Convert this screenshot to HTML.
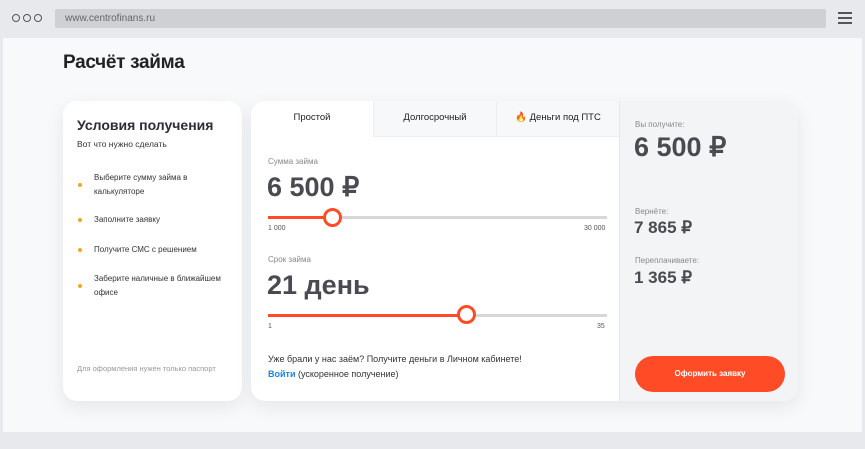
<!DOCTYPE html>
<html><head><meta charset="utf-8"><style>
*{margin:0;padding:0;box-sizing:border-box}
body{width:865px;height:449px;background:#e8e9ec;font-family:"Liberation Sans",sans-serif;position:relative;overflow:hidden;color:#2b2d33}
.abs{position:absolute}
.dot{width:8px;height:8px;border:1.5px solid #555;border-radius:50%;top:14px}
.url{left:55px;top:9px;width:771px;height:19px;background:#cfd0d4;border-radius:2px;font-size:10px;color:#666;padding:4px 0 0 10px}
.ham{left:838px;width:14px;height:2px;background:#555}
.content{left:3px;top:38px;width:859px;height:394px;background:#f8f9fb}
.card{background:#fff;border-radius:14px;box-shadow:0 6px 18px rgba(0,0,0,.08)}
.li{left:94px;font-size:8px;line-height:14px;color:#333}
.b{left:78px;width:4px;height:4px;border-radius:50%;background:#f5a623}
.tab{top:101px;height:36px;font-size:9.5px;text-align:center;line-height:34px;color:#222;background:#f7f8f9;border-left:1px solid #eceef0;border-bottom:1px solid #eceef0}
.lbl{font-size:8px;color:#888}
.big{font-weight:bold;font-size:27px;color:#4a4b50}
.track{left:268px;width:339px;height:3px;background:#d6d7db}
.fill{left:268px;height:3px;background:#ff4b26}
.knob{width:19px;height:19px;border-radius:50%;background:#fff;border:3px solid #ff4b26}
.small{font-size:7px;color:#555}
</style></head><body>
<div class="abs dot" style="left:12px"></div><div class="abs dot" style="left:23px"></div><div class="abs dot" style="left:34px"></div>
<div class="abs url">www.centrofinans.ru</div>
<div class="abs ham" style="top:12px"></div><div class="abs ham" style="top:17px"></div><div class="abs ham" style="top:22px"></div>
<div class="abs content"></div>
<div class="abs" style="left:63px;top:52px;font-size:19px;font-weight:bold;color:#222;letter-spacing:-0.3px">Расчёт займа</div>

<div class="abs card" style="left:63px;top:101px;width:179px;height:300px"></div>
<div class="abs" style="left:77px;top:117px;font-size:14px;font-weight:bold;color:#2b2d38">Условия получения</div>
<div class="abs" style="left:77px;top:139px;font-size:8.5px;color:#333">Вот что нужно сделать</div>
<div class="abs b" style="top:183px"></div><div class="abs li" style="top:171px">Выберите сумму займа в<br>калькуляторе</div>
<div class="abs b" style="top:218px"></div><div class="abs li" style="top:213px">Заполните заявку</div>
<div class="abs b" style="top:248px"></div><div class="abs li" style="top:243px">Получите СМС с решением</div>
<div class="abs b" style="top:284px"></div><div class="abs li" style="top:272px">Заберите наличные в ближайшем<br>офисе</div>
<div class="abs" style="left:77px;top:364px;font-size:7.5px;color:#999">Для оформления нужен только паспорт</div>

<div class="abs card" style="left:251px;top:101px;width:547px;height:300px;overflow:hidden">
 <div class="abs" style="left:368px;top:0;width:179px;height:300px;background:#f3f4f6;border-left:1px solid #e6e7ea"></div>
</div>
<div class="abs tab" style="left:251px;width:122px;background:#fff;border:none;border-top-left-radius:14px">Простой</div>
<div class="abs tab" style="left:373px;width:123px">Долгосрочный</div>
<div class="abs tab" style="left:496px;width:123px"><span style="color:#ff5a1f">🔥</span> Деньги под ПТС</div>

<div class="abs lbl" style="left:268px;top:157px">Сумма займа</div>
<div class="abs big" style="left:267px;top:172px">6 500 ₽</div>
<div class="abs track" style="top:216px"></div><div class="abs fill" style="top:216px;width:64px"></div>
<div class="abs knob" style="left:323px;top:208px"></div>
<div class="abs small" style="left:268px;top:225px">1 000</div><div class="abs small" style="left:584px;top:225px">30 000</div>

<div class="abs lbl" style="left:268px;top:255px">Срок займа</div>
<div class="abs big" style="left:267px;top:270px">21 день</div>
<div class="abs track" style="top:314px"></div><div class="abs fill" style="top:314px;width:199px"></div>
<div class="abs knob" style="left:457px;top:305px"></div>
<div class="abs small" style="left:268px;top:323px">1</div><div class="abs small" style="left:597px;top:323px">35</div>

<div class="abs" style="left:268px;top:352px;font-size:9px;line-height:15px;color:#333">Уже брали у нас заём? Получите деньги в Личном кабинете!<br><span style="color:#1a82e2;font-weight:bold">Войти</span> (ускоренное получение)</div>

<div class="abs lbl" style="left:635px;top:120px">Вы получите:</div>
<div class="abs" style="left:634px;top:132px;font-size:27px;font-weight:bold;color:#4a4b50">6 500 ₽</div>
<div class="abs lbl" style="left:635px;top:207px">Вернёте:</div>
<div class="abs" style="left:634px;top:218px;font-size:17px;font-weight:bold;color:#4a4b50">7 865 ₽</div>
<div class="abs lbl" style="left:635px;top:256px">Переплачиваете:</div>
<div class="abs" style="left:634px;top:268px;font-size:17px;font-weight:bold;color:#4a4b50">1 365 ₽</div>
<div class="abs" style="left:635px;top:356px;width:150px;height:36px;border-radius:18px;background:#ff4b26;color:#fff;font-size:8px;font-weight:bold;text-align:center;line-height:36px">Оформить заявку</div>
</body></html>
